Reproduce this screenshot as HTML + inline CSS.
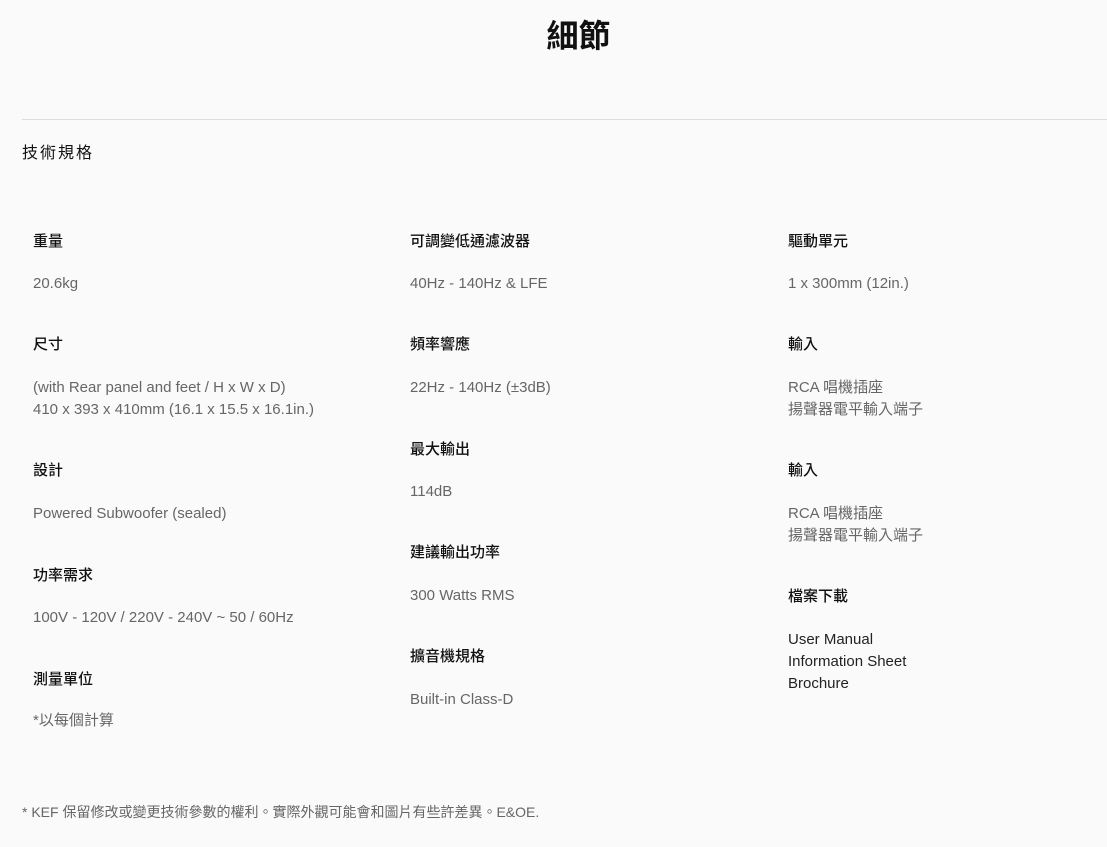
<!DOCTYPE html>
<html><head><meta charset="utf-8"><style>
body{margin:0;width:1107px;height:847px;background:#fafafa;font-family:"Liberation Sans","Noto Sans CJK TC",sans-serif;position:relative;overflow:hidden}
.a{position:absolute;white-space:nowrap;line-height:22px}
.l{font-size:15px;color:#111;font-weight:500}
.v{font-size:15px;color:#666}
</style></head><body>
<div class="a" style="left:0;width:1157px;text-align:center;top:15px;font-size:32px;line-height:42px;font-weight:bold;color:#111">細節</div>
<div style="position:absolute;left:22px;right:0;top:119px;border-top:1px solid #ddd"></div>
<div class="a" style="left:22px;top:143px;font-size:16px;letter-spacing:2px;color:#111">技術規格</div>

<div class="a l" style="left:33px;top:231px">重量</div>
<div class="a v" style="left:33px;top:273px">20.6kg</div>
<div class="a l" style="left:33px;top:334px">尺寸</div>
<div class="a v" style="left:33px;top:377px">(with Rear panel and feet / H x W x D)<br>410 x 393 x 410mm (16.1 x 15.5 x 16.1in.)</div>
<div class="a l" style="left:33px;top:460px">設計</div>
<div class="a v" style="left:33px;top:503px">Powered Subwoofer (sealed)</div>
<div class="a l" style="left:33px;top:565px">功率需求</div>
<div class="a v" style="left:33px;top:607px">100V - 120V / 220V - 240V ~ 50 / 60Hz</div>
<div class="a l" style="left:33px;top:669px">測量單位</div>
<div class="a v" style="left:33px;top:710px">*以每個計算</div>

<div class="a l" style="left:410px;top:231px">可調變低通濾波器</div>
<div class="a v" style="left:410px;top:273px">40Hz - 140Hz &amp; LFE</div>
<div class="a l" style="left:410px;top:334px">頻率響應</div>
<div class="a v" style="left:410px;top:377px">22Hz - 140Hz (±3dB)</div>
<div class="a l" style="left:410px;top:439px">最大輸出</div>
<div class="a v" style="left:410px;top:481px">114dB</div>
<div class="a l" style="left:410px;top:542px">建議輸出功率</div>
<div class="a v" style="left:410px;top:585px">300 Watts RMS</div>
<div class="a l" style="left:410px;top:646px">擴音機規格</div>
<div class="a v" style="left:410px;top:689px">Built-in Class-D</div>

<div class="a l" style="left:788px;top:231px">驅動單元</div>
<div class="a v" style="left:788px;top:273px">1 x 300mm (12in.)</div>
<div class="a l" style="left:788px;top:334px">輸入</div>
<div class="a v" style="left:788px;top:377px">RCA 唱機插座<br>揚聲器電平輸入端子</div>
<div class="a l" style="left:788px;top:460px">輸入</div>
<div class="a v" style="left:788px;top:503px">RCA 唱機插座<br>揚聲器電平輸入端子</div>
<div class="a l" style="left:788px;top:586px">檔案下載</div>
<div class="a" style="left:788px;top:629px;font-size:15px;color:#222">User Manual<br>Information Sheet<br>Brochure</div>

<div class="a" style="left:22px;top:801px;font-size:14px;color:#666">* KEF 保留修改或變更技術參數的權利。實際外觀可能會和圖片有些許差異。E&amp;OE.</div>
</body></html>
